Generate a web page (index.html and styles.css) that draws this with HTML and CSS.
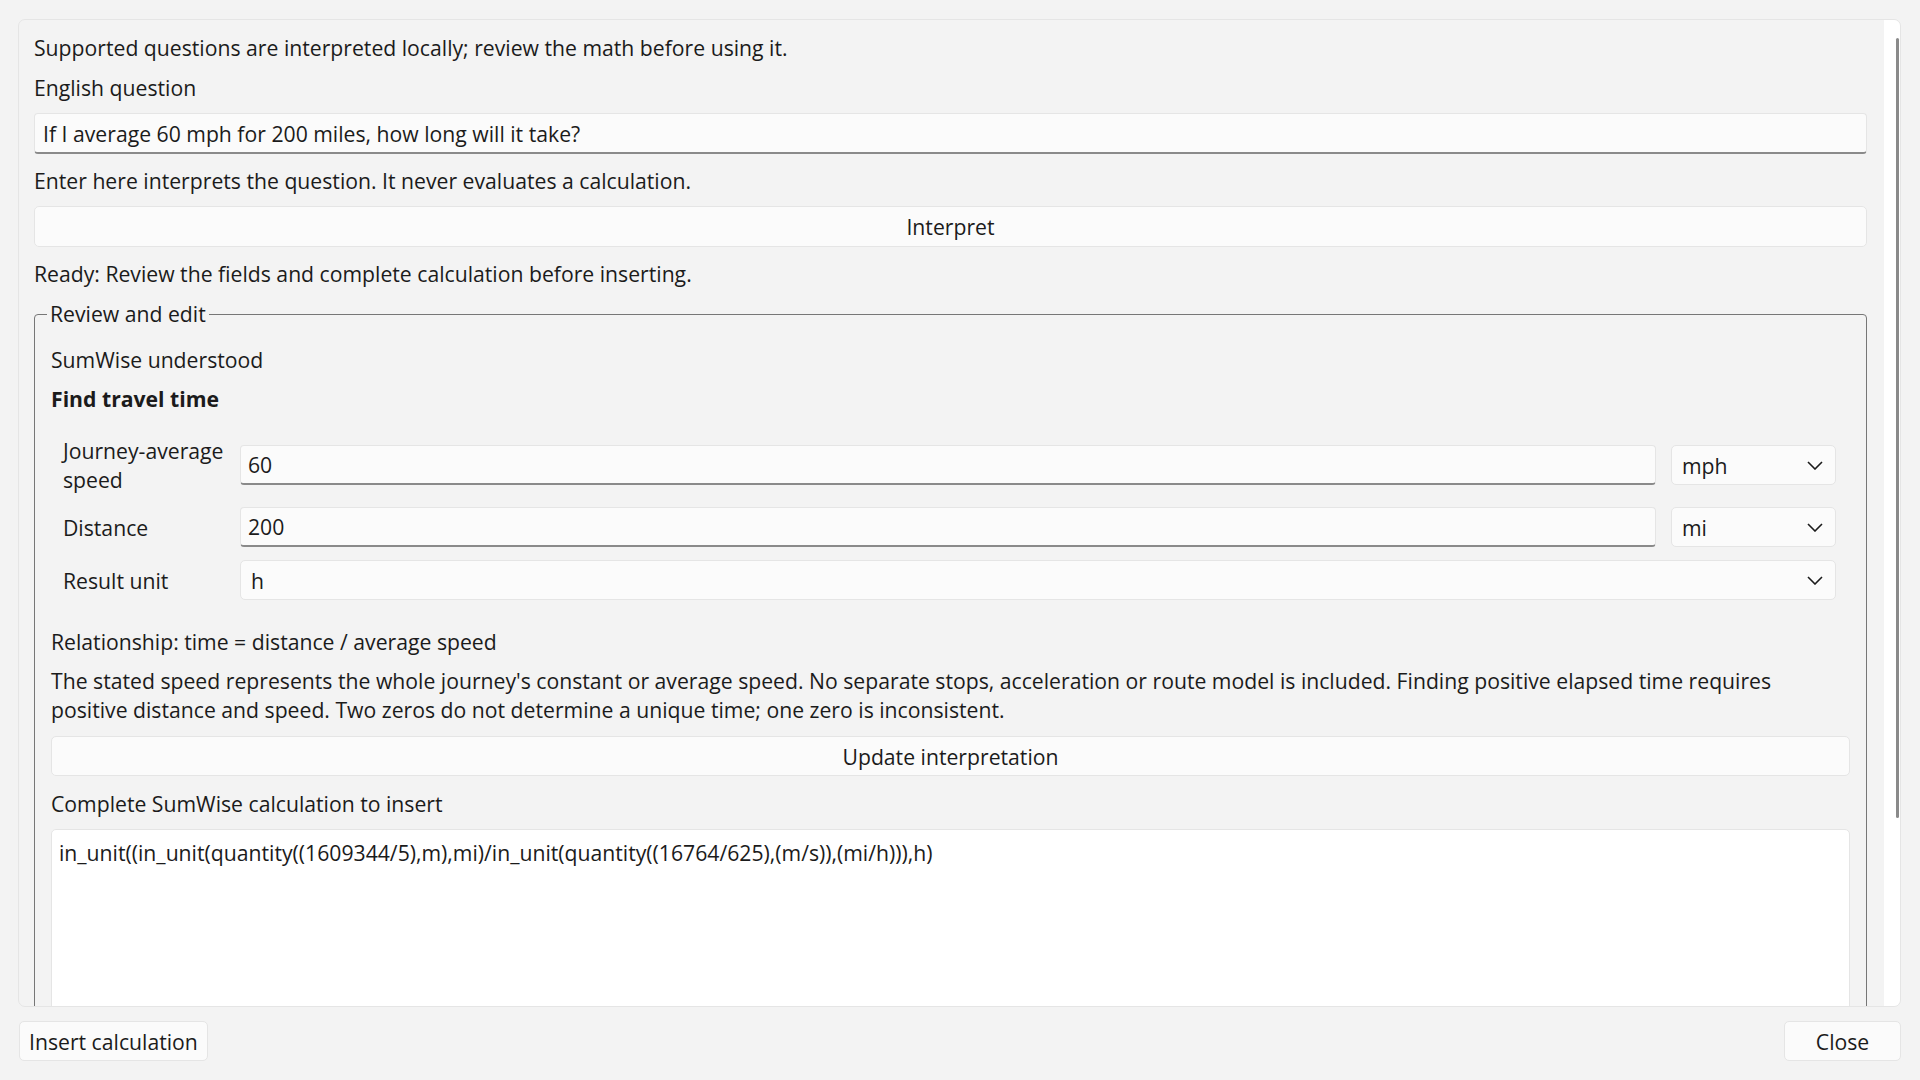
FILE: index.html
```html
<!DOCTYPE html>
<html lang="en">
<head>
<meta charset="utf-8">
<title>SumWise – Ask in English</title>
<link rel="stylesheet" href="styles.css">
</head>
<body>
<div class="dialog">
  <div class="panel">
    <div class="scroll-content">
      <p class="txt">Supported questions are interpreted locally; review the math before using it.</p>
      <label class="txt" for="question">English question</label>
      <input id="question" class="field field-wide" type="text" value="If I average 60 mph for 200 miles, how long will it take?">
      <p class="txt after-ctl">Enter here interprets the question. It never evaluates a calculation.</p>
      <button class="btn btn-wide" type="button">Interpret</button>
      <p class="txt after-ctl">Ready: Review the fields and complete calculation before inserting.</p>
      <fieldset class="group">
        <legend>Review and edit</legend>
        <p class="txt">SumWise understood</p>
        <p class="txt strong">Find travel time</p>
        <div class="form">
          <label class="form-label" for="speed"><span class="nowrap">Journey-average</span> speed</label>
          <input id="speed" class="field" type="text" value="60">
          <div class="combo"><span>mph</span><svg class="chev" viewBox="0 0 16 9"><polyline points="1,1 8,8 15,1"/></svg></div>
          <label class="form-label" for="distance">Distance</label>
          <input id="distance" class="field" type="text" value="200">
          <div class="combo"><span>mi</span><svg class="chev" viewBox="0 0 16 9"><polyline points="1,1 8,8 15,1"/></svg></div>
          <label class="form-label">Result unit</label>
          <div class="combo combo-wide"><span>h</span><svg class="chev" viewBox="0 0 16 9"><polyline points="1,1 8,8 15,1"/></svg></div>
        </div>
        <p class="txt relation">Relationship: time = distance / average speed</p>
        <p class="para">The stated speed represents the whole journey's constant or average speed. No separate stops, acceleration or route model is included. Finding positive elapsed time requires positive distance and speed. Two zeros do not determine a unique time; one zero is inconsistent.</p>
        <button class="btn btn-wide btn-update" type="button">Update interpretation</button>
        <label class="txt calc-label" for="calc">Complete SumWise calculation to insert</label>
        <textarea id="calc" class="calc" spellcheck="false">in_unit((in_unit(quantity((1609344/5),m),mi)/in_unit(quantity((16764/625),(m/s)),(mi/h))),h)</textarea>
      </fieldset>
    </div>
    <div class="scrollbar"><div class="thumb"></div></div>
  </div>
  <div class="actions">
    <button class="btn" type="button">Insert calculation</button>
    <button class="btn" type="button">Close</button>
  </div>
</div>
</body>
</html>
```

FILE: styles.css
```css
* { box-sizing: border-box; }

html, body {
  margin: 0;
  height: 100%;
}

body {
  background: #f3f3f3;
  color: #1b1b1b;
  font-family: "Open Sans", "Noto Sans", "DejaVu Sans", sans-serif;
  font-size: 21.2px;
}

.dialog {
  height: 1080px;
  display: flex;
  flex-direction: column;
  gap: 14px;
  padding: 19px 19px 19px 18px;
}

.dialog > * { flex-shrink: 0; }

.panel {
  flex: 1 1 auto;
  min-height: 0;
  display: flex;
  border: 1px solid #e5e5e5;
  border-radius: 7px;
  background: #f3f3f3;
  overflow: hidden;
}

.dialog > .panel { flex-shrink: 1; }

.scroll-content {
  flex: 1;
  min-width: 0;
  display: flex;
  flex-direction: column;
  gap: 10px;
  padding: 13px 17px 0 15px;
  overflow: hidden;
}

.scroll-content > * { flex-shrink: 0; }

.scrollbar {
  flex: none;
  width: 16px;
  background: #ffffff;
  padding-top: 18px;
}

.thumb {
  width: 3px;
  height: 780px;
  margin-left: 12px;
  background: #8a8a8a;
  border-radius: 2px;
}

.txt {
  margin: 0;
  line-height: 30px;
}

.after-ctl { margin-top: 2px; }

.strong { font-weight: 700; }

.field {
  display: block;
  width: 100%;
  height: 40px;
  padding: 0 7px;
  border: 1px solid #e5e5e5;
  border-bottom: 2px solid #8a8a8a;
  border-radius: 4px;
  background: #fbfbfb;
  font: inherit;
  color: inherit;
  outline: none;
}

.field-wide {
  height: 41px;
  padding-left: 8px;
}

.btn {
  height: 40px;
  min-width: 117px;
  padding: 0 9px;
  background: #fbfbfb;
  border: 1px solid #e5e5e5;
  border-radius: 5px;
  font: inherit;
  color: inherit;
}

.btn-wide {
  width: 100%;
  height: 41px;
}

.group {
  margin: 0;
  min-width: 0;
  padding: 16px 16px 24px 16px;
  border: 1px solid #767676;
  border-radius: 4px;
  display: flex;
  flex-direction: column;
  gap: 9px;
}

.group > * { flex-shrink: 0; }

.group legend {
  padding: 0 3px;
  margin-left: -4px;
  line-height: 30px;
}

.form {
  display: grid;
  grid-template-columns: 162px 1fr 165px;
  column-gap: 15px;
  row-gap: 13px;
  align-items: center;
  padding: 0 14px 0 12px;
  margin-top: 13px;
}

.form-label { line-height: 29px; }

.nowrap { white-space: nowrap; }

.combo {
  height: 40px;
  display: flex;
  align-items: center;
  justify-content: space-between;
  padding: 0 12px 0 10px;
  background: #fbfbfb;
  border: 1px solid #e5e5e5;
  border-radius: 5px;
}

.combo-wide { grid-column: 2 / 4; }

.chev {
  width: 16px;
  height: 9px;
  fill: none;
  stroke: #1b1b1b;
  stroke-width: 1.6;
}

.relation { margin-top: 18px; }

.para {
  margin: 0;
  line-height: 29px;
}

.btn-update {
  height: 40px;
  margin-top: 3px;
}

.calc-label { margin-top: 4px; }

.calc {
  display: block;
  width: 100%;
  height: 260px;
  margin-top: 1px;
  padding: 8px 7px;
  resize: none;
  border: 1px solid #e5e5e5;
  border-radius: 5px;
  background: #ffffff;
  font: inherit;
  line-height: 30px;
  color: inherit;
  outline: none;
}

.actions {
  display: flex;
  justify-content: space-between;
  padding-left: 1px;
}
```
